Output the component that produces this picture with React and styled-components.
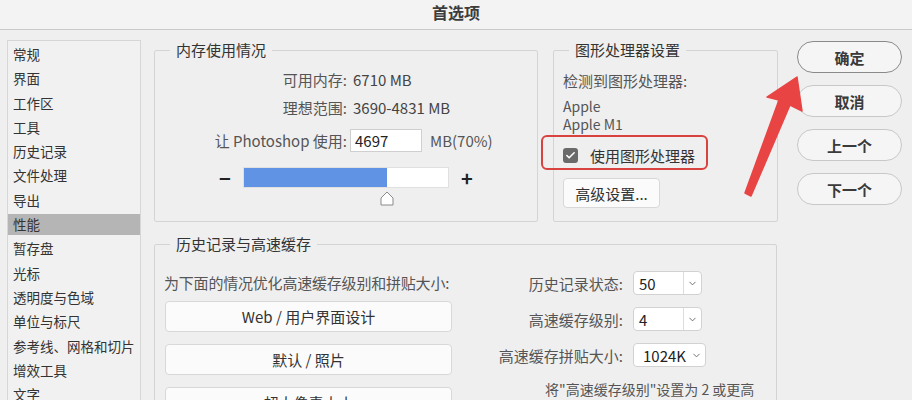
import styled, { createGlobalStyle } from 'styled-components';
import { ChevronDown, Check } from 'lucide-react';

const GlobalStyle = createGlobalStyle`
  body {
    margin: 0;
    background: #efefef;
    font-family: "Noto Sans CJK SC", "Noto Sans", sans-serif;
    color: #333;
  }
`;

const sections = [
  '常规', '界面', '工作区', '工具', '历史记录', '文件处理', '导出', '性能',
  '暂存盘', '光标', '透明度与色域', '单位与标尺', '参考线、网格和切片', '增效工具', '文字',
];

const memoryPct = 70;

const Window = styled.div`
  position: relative;
  width: 912px;
  height: 400px;
  overflow: hidden;
  background: #efefef;
`;

const TitleBar = styled.div`
  height: 30px;
  box-sizing: border-box;
  border-bottom: 1px solid #c9c9c9;
  background: #f3f3f3;
  text-align: center;
  font-size: 16px;
  font-weight: 700;
  line-height: 24px;
  color: #3d3d3d;
`;

const Content = styled.div`
  display: flex;
  align-items: flex-start;
  padding: 10px 10px 0 7px;
`;

const SideList = styled.div`
  width: 134px;
  height: 380px;
  box-sizing: border-box;
  border: 1px solid #d6d6d6;
  background: #f1f1f1;
  padding-top: 3px;
  display: flex;
  flex-direction: column;
  gap: 3.3px;
`;

const SideItem = styled.div`
  height: 21px;
  line-height: 21px;
  padding-left: 5px;
  font-size: 13.5px;
  color: #333;
  white-space: nowrap;
  background: ${p => (p.$active ? '#b5b5b5' : 'transparent')};
`;

const Main = styled.div`
  width: 624px;
  margin-left: 13px;
  display: flex;
  flex-direction: column;
`;

const TopRow = styled.div`
  display: flex;
  gap: 15px;
`;

const Group = styled.fieldset`
  margin: 0;
  padding: 0;
  min-width: 0;
  box-sizing: border-box;
  border: 1px solid #d4d4d4;
  border-radius: 2px;
  width: ${p => p.$w}px;
  height: ${p => p.$h}px;
  margin-top: ${p => p.$mt || 0}px;
`;

const Legend = styled.legend`
  margin-left: 15px;
  padding: 0 6px;
  font-size: 15px;
  line-height: 20px;
  color: #333;
`;

const MemRow = styled.div`
  display: flex;
  align-items: center;
  height: ${p => p.$h}px;
  margin-top: ${p => p.$mt}px;
  font-size: 15px;
`;

const MemLabel = styled.span`
  width: 192px;
  text-align: right;
  color: #555;
`;

const MemValue = styled.span`
  margin-left: 6px;
  color: #444;
`;

const NumberBox = styled.div`
  width: 72px;
  height: 23px;
  margin-left: 3px;
  box-sizing: border-box;
  border: 1px solid #cfcfcf;
  background: #fff;
  padding-left: 4px;
  line-height: 21px;
  color: #222;
`;

const Unit = styled.span`
  margin-left: 8px;
  color: #555;
`;

const SliderRow = styled.div`
  display: flex;
  justify-content: center;
  align-items: center;
  gap: 12px;
  height: 21px;
  margin-top: 15px;
`;

const Step = styled.span`
  width: 12px;
  text-align: center;
  font-size: 20px;
  font-weight: 700;
  line-height: 21px;
  color: #222;
`;

const Track = styled.div`
  position: relative;
  width: 206px;
  height: 21px;
  box-sizing: border-box;
  border: 1px solid #e0e0e0;
  background: #fff;
`;

const Fill = styled.div`
  height: 100%;
  background: #6093e4;
`;

const Thumb = styled.svg`
  position: absolute;
  top: 23px;
  transform: translateX(-50%);
`;

const GpuBody = styled.div`
  padding-left: 9px;
  font-size: 15px;
`;

const Muted = styled.div`
  margin-top: ${p => p.$mt}px;
  line-height: ${p => p.$lh || 20}px;
  font-size: ${p => p.$fs || 15}px;
  white-space: pre-line;
  color: #555;
`;

const CheckRow = styled.div`
  position: relative;
  display: flex;
  align-items: center;
  height: 20px;
  margin-top: 12px;
  color: #333;

  &::after {
    content: '';
    position: absolute;
    left: -22px;
    top: -10px;
    width: 167px;
    height: 35px;
    box-sizing: border-box;
    border: 2.5px solid #d8423f;
    border-radius: 6px;
  }
`;

const CheckBox = styled.span`
  width: 15px;
  height: 15px;
  border-radius: 3px;
  background: #6a6a6a;
  display: flex;
  align-items: center;
  justify-content: center;
  margin-right: 12px;
`;

const FlatButton = styled.div`
  width: ${p => p.$w}px;
  height: ${p => p.$h}px;
  margin-top: ${p => p.$mt || 0}px;
  margin-left: ${p => p.$ml || 0}px;
  box-sizing: border-box;
  border: 1px solid #d8d8d8;
  border-radius: 4px;
  background: #fbfbfb;
  display: flex;
  align-items: center;
  justify-content: center;
  font-size: 15px;
  color: #333;
`;

const HistoryBody = styled.div`
  display: flex;
`;

const HistoryLeft = styled.div`
  width: 288px;
  padding-left: 9px;
  display: flex;
  flex-direction: column;
`;

const Intro = styled.div`
  margin-top: 19px;
  line-height: 20px;
  font-size: 15px;
  white-space: nowrap;
  letter-spacing: -0.2px;
  color: #555;
`;

const PresetList = styled.div`
  display: flex;
  flex-direction: column;
  gap: 12px;
  margin-top: 8px;
`;

const CacheGrid = styled.div`
  display: grid;
  grid-template-columns: 171px auto;
  column-gap: 10px;
  row-gap: 12px;
  align-items: center;
  align-content: start;
  margin-top: 17px;
  font-size: 15px;
`;

const CacheLabel = styled.span`
  text-align: right;
  color: #555;
`;

const Select = styled.div`
  width: ${p => p.$w}px;
  height: 24px;
  box-sizing: border-box;
  border: 1px solid #d2d2d2;
  border-radius: 4px;
  background: #fff;
  display: flex;
  align-items: center;
  color: #222;
`;

const SelectValue = styled.span`
  flex: 1;
  padding-left: ${p => p.$pl || 5}px;
`;

const SelectArrow = styled.span`
  width: 17px;
  height: 100%;
  display: flex;
  align-items: center;
  justify-content: center;
  border-left: ${p => (p.$divided ? '1px solid #dcdcdc' : 'none')};
  color: #666;
`;

const Note = styled.div`
  grid-column: 1 / -1;
  padding-left: 93px;
  font-size: 14px;
  line-height: 20px;
  white-space: nowrap;
  color: #555;
`;

const ActionColumn = styled.div`
  margin-left: 19px;
  margin-top: 1px;
  display: flex;
  flex-direction: column;
  gap: 12px;
`;

const PillButton = styled.div`
  width: 105px;
  height: 32px;
  box-sizing: border-box;
  border-radius: 16px;
  border: 1.5px solid ${p => (p.$primary ? '#8a8a8a' : '#c8c8c8')};
  background: #f5f5f5;
  display: flex;
  align-items: center;
  justify-content: center;
  font-size: 15px;
  font-weight: 600;
  color: #3a3a3a;
`;

const Arrow = styled.svg`
  position: absolute;
  left: 740px;
  top: 70px;
`;

const CacheSelect = ({ value, width, divided = true, pl }) => (
  <Select $w={width}>
    <SelectValue $pl={pl}>{value}</SelectValue>
    <SelectArrow $divided={divided}>
      <ChevronDown size={11} strokeWidth={2} />
    </SelectArrow>
  </Select>
);

export default function App() {
  return (
    <Window>
      <GlobalStyle />
      <TitleBar>首选项</TitleBar>
      <Content>
        <SideList>
          {sections.map(s => (
            <SideItem key={s} $active={s === '性能'}>{s}</SideItem>
          ))}
        </SideList>

        <Main>
          <TopRow>
            <Group $w={384} $h={182}>
              <Legend>内存使用情况</Legend>
              <MemRow $h={20} $mt={9}>
                <MemLabel>可用内存:</MemLabel>
                <MemValue>6710 MB</MemValue>
              </MemRow>
              <MemRow $h={20} $mt={8}>
                <MemLabel>理想范围:</MemLabel>
                <MemValue>3690-4831 MB</MemValue>
              </MemRow>
              <MemRow $h={23} $mt={12}>
                <MemLabel>让 Photoshop 使用:</MemLabel>
                <NumberBox>4697</NumberBox>
                <Unit>MB({memoryPct}%)</Unit>
              </MemRow>
              <SliderRow>
                <Step>−</Step>
                <Track>
                  <Fill style={{ width: `${memoryPct}%` }} />
                  <Thumb width="14" height="15" viewBox="0 0 14 15" style={{ left: `${memoryPct}%` }}>
                    <path d="M7 1 L13 7 L13 14 L1 14 L1 7 Z" fill="#fff" stroke="#8a8a8a" strokeWidth="1" strokeLinejoin="round" />
                  </Thumb>
                </Track>
                <Step>+</Step>
              </SliderRow>
            </Group>

            <Group $w={225} $h={182}>
              <Legend>图形处理器设置</Legend>
              <GpuBody>
                <Muted $mt={11}>检测到图形处理器:</Muted>
                <Muted $mt={6} $lh={18} $fs={14}>{'Apple\nApple M1'}</Muted>
                <CheckRow>
                  <CheckBox>
                    <Check size={11} color="#fff" strokeWidth={3.5} />
                  </CheckBox>
                  使用图形处理器
                </CheckRow>
                <FlatButton $w={97} $h={30} $mt={13}>高级设置...</FlatButton>
              </GpuBody>
            </Group>
          </TopRow>

          <Group $w={623} $h={200} $mt={12}>
            <Legend>历史记录与高速缓存</Legend>
            <HistoryBody>
              <HistoryLeft>
                <Intro>为下面的情况优化高速缓存级别和拼贴大小:</Intro>
                <PresetList>
                  <FlatButton $w={287} $h={31} $ml={1}>Web / 用户界面设计</FlatButton>
                  <FlatButton $w={287} $h={31} $ml={1}>默认 / 照片</FlatButton>
                  <FlatButton $w={287} $h={31} $ml={1}>超大像素大小</FlatButton>
                </PresetList>
              </HistoryLeft>
              <CacheGrid>
                <CacheLabel>历史记录状态:</CacheLabel>
                <CacheSelect value="50" width={69} />
                <CacheLabel>高速缓存级别:</CacheLabel>
                <CacheSelect value="4" width={69} />
                <CacheLabel>高速缓存拼贴大小:</CacheLabel>
                <CacheSelect value="1024K" width={73} divided={false} pl={9} />
                <Note>将"高速缓存级别"设置为 2 或更高</Note>
              </CacheGrid>
            </HistoryBody>
          </Group>
        </Main>

        <ActionColumn>
          <PillButton $primary>确定</PillButton>
          <PillButton>取消</PillButton>
          <PillButton>上一个</PillButton>
          <PillButton>下一个</PillButton>
        </ActionColumn>
      </Content>

      <Arrow width="70" height="135" viewBox="740 70 70 135">
        <polygon
          points="797,77 802,111 790,105 751,196 745,193 779,100 767,97"
          fill="#e94444"
          stroke="#e94444"
          strokeWidth="1.5"
          strokeLinejoin="round"
        />
      </Arrow>
    </Window>
  );
}
